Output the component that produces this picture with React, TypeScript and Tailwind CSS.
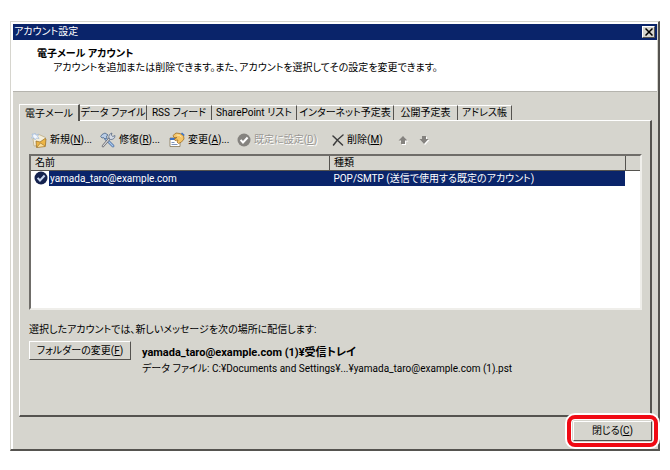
import type { ReactNode } from "react";

const raised =
  "border border-t-white border-l-white border-r-[#55534f] border-b-[#55534f]";

function Key({ children }: { children: string }) {
  return (
    <span>
      (<span className="underline underline-offset-1">{children}</span>)
    </span>
  );
}

function NewIcon() {
  return (
    <svg width="16" height="16" viewBox="0 0 16 16" aria-hidden="true">
      <path d="M2 7 8 2.500l6.500 3L14 13 3 14z" fill="#f4eedb" stroke="#b8a67c" strokeWidth=".7" />
      <path d="m5 9 4 1 5-3.500 1 .5-.7 7.500-8.800 1z" fill="#edb545" stroke="#946a22" strokeWidth=".7" />
      <path d="m6 15 3.500-4 4.500 3" fill="#fbdf9c" stroke="#946a22" strokeWidth=".6" />
      <path d="m4 1 1 2.300L7.500 2 6.500 4.200 8 6.500 5.500 6 4 8 3 5.800.5 6 2 4.200 1 2l2.300.3z" fill="#f4f8ff" stroke="#9db7d8" strokeWidth=".7" />
    </svg>
  );
}

function RepairIcon() {
  return (
    <svg width="16" height="16" viewBox="0 0 16 16" aria-hidden="true">
      <path d="m5 6 8 8" stroke="#4a6da0" strokeWidth="2.800" strokeLinecap="round" />
      <path d="m5 6 8 8" stroke="#a9c9ee" strokeWidth="1.200" strokeLinecap="round" />
      <path d="M2 2.500 5 1l3 2-1.500 1L7 5.500 5 7 3.500 5.500 2 6 .7 4.500z" fill="#b9cde6" stroke="#4a6488" strokeWidth=".8" />
      <path d="m3 14 7-8" stroke="#6b6b70" strokeWidth="2.600" strokeLinecap="round" />
      <path d="m3 14 7-8" stroke="#e4e6ea" strokeWidth="1.100" strokeLinecap="round" />
      <path d="M9 6c-.6-2 .5-4.500 3-5l-.7 2.200 1.500 1.300L15 3.500c.2 2.600-2 4.300-4.500 4z" fill="#d4dbe6" stroke="#5b6b85" strokeWidth=".8" />
    </svg>
  );
}

function ChangeIcon() {
  return (
    <svg width="16" height="16" viewBox="0 0 16 16" aria-hidden="true">
      <path d="M1 6h10v8.500H1z" fill="#fff" stroke="#857655" strokeWidth=".8" />
      <path d="M1 6h6v2H1z" fill="#3b72c6" />
      <path d="M2.500 10.500h3M2.500 12.500h6" stroke="#7e95ba" />
      <path d="M4 3.500 7 1l4 .5 3.500 2L15 7l-2.500 3-3 1.500L8 10l1-2-3 .5L5.500 7 8 5.500 5 5.500z" fill="#f5c465" stroke="#a0702a" strokeWidth=".8" />
      <path d="m7.500 3 3 .3 2 1.700" fill="none" stroke="#fdeab8" />
      <path d="m12.500 1 2.700 2.500" stroke="#3b72c6" strokeWidth="1.600" />
    </svg>
  );
}

function CheckIcon({ fill, mark }: { fill: string; mark: string }) {
  return (
    <svg width="14" height="14" viewBox="0 0 14 14" aria-hidden="true" className="shrink-0">
      <circle cx="7" cy="7" r="6.500" fill={fill} />
      <path d="m3.600 6.800 2.400 2.700 4.600-5" fill="none" stroke={mark} strokeWidth="2" />
    </svg>
  );
}

function DeleteIcon() {
  return (
    <svg width="12" height="12" viewBox="0 0 12 12" aria-hidden="true">
      <path d="M1 2 10.500 11M11 1C7 4 4 7 1.500 11" fill="none" stroke="#3c3c3c" strokeWidth="1.500" strokeLinecap="round" />
    </svg>
  );
}

function ArrowIcon({ down = false }: { down?: boolean }) {
  const d = down ? "M3 1h4v3h2.500L5 9 .5 4H3z" : "M5 1l4.500 4.500H7V9H3V5.500H.5z";
  return (
    <svg width="11" height="11" viewBox="0 0 11 11" aria-hidden="true">
      <path d={d} fill="#fff" transform="translate(1 1)" />
      <path d={d} fill="#85837f" />
    </svg>
  );
}

const tabs = [
  { label: "データ ファイル", width: "w-[67px]" },
  { label: "RSS フィード", width: "w-[65px]" },
  { label: "SharePoint リスト", width: "w-[85px]" },
  { label: "インターネット予定表", width: "w-[97px]" },
  { label: "公開予定表", width: "w-16" },
  { label: "アドレス帳", width: "w-[54px]" },
];

function Tool({
  icon,
  width,
  disabled,
  children,
}: {
  icon: ReactNode;
  width: string;
  disabled?: boolean;
  children: ReactNode;
}) {
  return (
    <button
      type="button"
      disabled={disabled}
      className={`flex h-5 shrink-0 items-center gap-[3px] text-[10px] whitespace-nowrap disabled:text-[#9a9894] disabled:[text-shadow:1px_1px_0_#fff] ${width}`}
    >
      {icon}
      <span>{children}</span>
    </button>
  );
}

export default function App() {
  return (
    <div className="bg-white px-[10px] pt-[21px] pb-5 font-[Roboto,'Noto_Sans_CJK_JP',sans-serif] text-[11px] leading-[14px] text-black [font-feature-settings:'palt']">
      <main className="border-t border-r-2 border-b-2 border-l border-t-[#d6d5ce] border-r-[#55534f] border-b-[#55534f] border-l-[#d6d5ce] bg-[#d6d5ce]">
        <div className="border-t-2 border-l-2 border-white pr-px">
          <header className="flex h-4 items-center justify-between bg-[#0a246a] pr-0.5 pl-px text-[10px] text-white">
            <h1>アカウント設定</h1>
            <button
              type="button"
              aria-label="閉じる"
              className={`flex h-3 w-[13px] items-center justify-center bg-[#d6d5ce] ${raised}`}
            >
              <svg width="8" height="8" viewBox="0 0 8 8" aria-hidden="true">
                <path d="m.5.5 7 7m0-7-7 7" stroke="#000" strokeWidth="1.500" />
              </svg>
            </button>
          </header>

          <section className="h-[52px] border-b border-[#b5b4ae] bg-white pt-1.5 pl-6 text-[10px]">
            <h2 className="leading-[15px] font-bold">電子メール アカウント</h2>
            <p className="pl-4 leading-[13px]">
              アカウントを追加または削除できます。また、アカウントを選択してその設定を変更できます。
            </p>
          </section>

          <div className="pt-3 pr-[5px] pb-2 pl-1.5">
            <div role="tablist" className="flex items-end">
              <button
                type="button"
                role="tab"
                aria-selected="true"
                className="z-10 -mb-px h-[17px] w-[61px] border-t border-r-2 border-l border-t-white border-r-[#55534f] border-l-white bg-[#d6d5ce] text-[10px] leading-[15px] whitespace-nowrap"
              >
                電子メール
              </button>
              {tabs.map((tab) => (
                <button
                  key={tab.label}
                  type="button"
                  role="tab"
                  aria-selected="false"
                  className={`flex h-[15px] shrink-0 items-center justify-center border-t border-r border-t-white border-r-[#55534f] text-[10px] whitespace-nowrap ${tab.width}`}
                >
                  {tab.label}
                </button>
              ))}
            </div>

            <div className="border-t border-r-2 border-b-2 border-l border-t-white border-r-[#55534f] border-b-[#55534f] border-l-white pr-2 pb-[38px] pl-[9px]">
              <div role="toolbar" className="flex items-center pt-[9px] pb-1 pl-0.5">
                <Tool icon={<NewIcon />} width="w-[69px]">新規<Key>N</Key>...</Tool>
                <Tool icon={<RepairIcon />} width="w-[69px]">修復<Key>R</Key>...</Tool>
                <Tool icon={<ChangeIcon />} width="w-[68px]">変更<Key>A</Key>...</Tool>
                <Tool icon={<CheckIcon fill="#85837f" mark="#fff" />} width="w-[95px]" disabled>
                  既定に設定<Key>D</Key>
                </Tool>
                <Tool icon={<DeleteIcon />} width="w-[66px]">削除<Key>M</Key></Tool>
                <button type="button" disabled aria-label="上へ" className="w-[21px]">
                  <ArrowIcon />
                </button>
                <button type="button" disabled aria-label="下へ">
                  <ArrowIcon down />
                </button>
              </div>

              <div className="h-[156px] border-2 border-t-[#6f6d69] border-r-[#efeeea] border-b-[#efeeea] border-l-[#6f6d69] bg-white">
                <table className="w-full table-fixed border-collapse text-left text-[10px]">
                  <colgroup>
                    <col className="w-[49%]" />
                    <col />
                    <col className="w-[15px]" />
                  </colgroup>
                  <thead>
                    <tr className="h-[14px] border-b border-[#55534f] bg-[#d6d5ce] leading-[13px]">
                      <th className="border-r border-[#55534f] p-0 pl-1 font-normal">名前</th>
                      <th className="border-r border-[#55534f] p-0 pl-1 font-normal">種類</th>
                      <td className="p-0" />
                    </tr>
                  </thead>
                  <tbody>
                    <tr aria-selected="true" className="h-[15px] leading-[15px] text-white">
                      <td className="p-0">
                        <div className="flex items-center gap-px pl-[3px]">
                          <CheckIcon fill="#14224f" mark="#c8d6f0" />
                          <span className="grow bg-[#0a246a] pl-px">yamada_taro@example.com</span>
                        </div>
                      </td>
                      <td className="bg-[#0a246a] p-0 pl-1 whitespace-nowrap">
                        POP/SMTP (送信で使用する既定のアカウント)
                      </td>
                      <td className="p-0" />
                    </tr>
                  </tbody>
                </table>
              </div>

              <p className="pt-[13px] text-[10px]">
                選択したアカウントでは、新しいメッセージを次の場所に配信します:
              </p>
              <div className="flex items-start gap-[11px] pt-1">
                <button
                  type="button"
                  className={`h-[19px] w-[102px] shrink-0 text-[10px] leading-[15px] whitespace-nowrap ${raised}`}
                >
                  フォルダーの変更<Key>F</Key>
                </button>
                <div className="pt-1 whitespace-nowrap">
                  <p className="leading-[16px] font-bold">yamada_taro@example.com (1)¥受信トレイ</p>
                  <p className="text-[10px] leading-[16px]">
                    データ ファイル: C:¥Documents and Settings¥...¥yamada_taro@example.com (1).pst
                  </p>
                </div>
              </div>
            </div>

            <footer className="flex justify-end pt-1">
              <div className="relative">
                <button type="button" className={`relative z-20 h-5 w-[79px] bg-[#d6d5ce] text-[10px] leading-[16px] ${raised}`}>
                  閉じる<Key>C</Key>
                </button>
                <span
                  aria-hidden="true"
                  className="absolute -inset-x-1.5 -inset-y-1.5 z-10 rounded-lg border-4 border-[#f00a14] bg-[#d6d5ce] shadow-[0_0_0_2px_#fff,inset_0_0_0_1px_#fff]"
                />
              </div>
            </footer>
          </div>
        </div>
      </main>
    </div>
  );
}
